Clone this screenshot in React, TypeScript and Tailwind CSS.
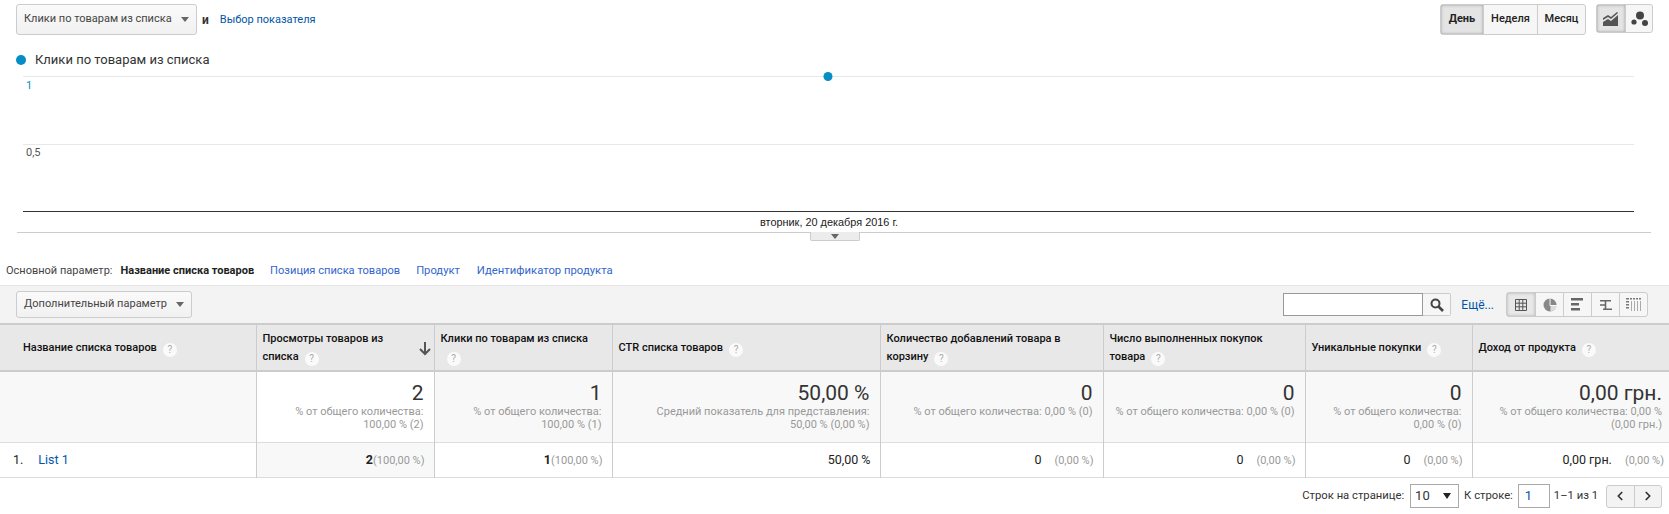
import { ChevronLeft, ChevronRight } from "lucide-react";

const link = "text-[#05a]";
const btn = "border border-[#ccc] bg-gradient-to-b from-[#fafafa] to-[#f1f1f1]";

const columns = [
  { title: "Просмотры товаров из", rest: "списка", big: "2", note: ["% от общего количества:", "100,00 % (2)"], value: "2", pct: "(100,00 %)", sorted: true, tight: true },
  { title: "Клики по товарам из списка", rest: "", big: "1", note: ["% от общего количества:", "100,00 % (1)"], value: "1", pct: "(100,00 %)", tight: true },
  { title: "CTR списка товаров", big: "50,00 %", note: ["Средний показатель для представления:", "50,00 % (0,00 %)"], value: "50,00 %", pct: "", single: true },
  { title: "Количество добавлений товара в", rest: "корзину", big: "0", note: ["% от общего количества: 0,00 % (0)"], value: "0", pct: "(0,00 %)" },
  { title: "Число выполненных покупок", rest: "товара", big: "0", note: ["% от общего количества: 0,00 % (0)"], value: "0", pct: "(0,00 %)" },
  { title: "Уникальные покупки", big: "0", note: ["% от общего количества:", "0,00 % (0)"], value: "0", pct: "(0,00 %)", single: true },
  { title: "Доход от продукта", big: "0,00 грн.", note: ["% от общего количества: 0,00 %", "(0,00 грн.)"], value: "0,00 грн.", pct: "(0,00 %)", single: true, last: true },
];

function Help() {
  return (
    <span className="ml-[6px] inline-flex h-[14px] w-[14px] items-center justify-center rounded-full bg-white/80 align-[-2px] text-[10px] font-normal text-[#aaa]">
      ?
    </span>
  );
}

function Caret() {
  return <span className="h-0 w-0 border-x-[4px] border-t-[5px] border-x-transparent border-t-[#666]" />;
}

function Chart() {
  return (
    <svg width="1669" height="171" viewBox="0 70 1669 171" className="block">
      <line x1="23" x2="1634" y1="76.5" y2="76.5" stroke="#e8e8e8" />
      <line x1="23" x2="1634" y1="144.5" y2="144.5" stroke="#e8e8e8" />
      <line x1="23" x2="1634" y1="211.5" y2="211.5" stroke="#333" />
      <line x1="17" x2="1651" y1="232.5" y2="232.5" stroke="#ccc" />
      <circle cx="828" cy="76.5" r="4.5" fill="#058dc7" />
      <text x="26" y="89" fontSize="11" fill="#058dc7" fontFamily="Roboto">1</text>
      <text x="26" y="156" fontSize="11" fill="#555" fontFamily="Roboto">0,5</text>
      <text x="760" y="226" fontSize="10.9" fill="#222" fontFamily="Liberation Sans">вторник, 20 декабря 2016 г.</text>
    </svg>
  );
}

function ViewIcons() {
  return (
    <div className="ml-[12px] flex h-[25px] rounded-[3px] border border-[#ccc] bg-[#f6f6f6]">
      <span className="flex w-[28px] items-center justify-center bg-[#e8e8e8] shadow-[inset_0_0_3px_#aaa]">
        <svg width="14" height="14" viewBox="0 0 14 14" fill="none" stroke="#555">
          <path d="M1.5 1.5h11v11h-11zM1.5 5.2h11M1.5 8.8h11M5.2 1.5v11M8.8 1.5v11" />
        </svg>
      </span>
      <span className="flex w-[28px] items-center justify-center border-l border-[#ccc]">
        <svg width="14" height="14" viewBox="0 0 14 14">
          <circle cx="7" cy="7" r="6.5" fill="#888" />
          <path d="M7.5 7.5h6A6.5 6.5 0 0 1 7.5 13.5z" fill="#ddd" />
          <path d="M7 0v7.5h7" fill="none" stroke="#f6f6f6" />
        </svg>
      </span>
      <span className="flex w-[28px] items-center justify-center border-l border-[#ccc]">
        <svg width="13" height="13" viewBox="0 0 13 13" fill="#666">
          <path d="M0 0h12v2.5H0zM0 5h8v2.5H0zM0 10h9v2.5H0z" />
        </svg>
      </span>
      <span className="flex w-[28px] items-center justify-center border-l border-[#ccc]">
        <svg width="13" height="12" viewBox="0 0 13 12" fill="#666">
          <path d="M1 1h11v1.5H1zM1 5.2h6V6.7H1zM4 9.5h9V11H4zM5.7 1h1.6v10H5.7z" />
        </svg>
      </span>
      <span className="flex w-[28px] items-center justify-center border-l border-[#ccc]">
        <svg width="15" height="13" viewBox="0 0 15 13">
          <path d="M0 0h3v1.5H0zM4 0h2v1.5H4zM7 0h2v1.5H7zM10 0h2v1.5h-2zM13 0h2v1.5h-2zM0 3h3v1.5H0zM0 6h3v1.5H0zM0 9h3v1.5H0z" fill="#777" />
          <path d="M5 3h1v10H5zM8 3h1v10H8zM11 3h1v10h-1zM14 3h1v10h-1z" fill="#aaa" />
        </svg>
      </span>
    </div>
  );
}

function Pager() {
  return (
    <div className="flex h-[37px] items-center justify-end pr-[7px] text-[11.25px] text-[#333]">
      <span>Строк на странице:</span>
      <span className="ml-[6px] flex h-[24px] w-[49px] items-center justify-between border border-[#aaa] bg-white px-[4px] text-[13px]">
        10
        <span className="mr-[3px] h-0 w-0 border-x-[4px] border-t-[6px] border-x-transparent border-t-[#222]" />
      </span>
      <span className="ml-[5px]">К строке:</span>
      <span className="ml-[5px] flex h-[24px] w-[32px] items-center border border-[#aaa] bg-white pl-[6px] text-[13px] text-[#05a]">1</span>
      <span className="ml-[4px]">1–1 из 1</span>
      <div className="ml-[8px] flex h-[23px] w-[56px] rounded-[3px] border border-[#ccc] bg-[#f3f3f3]">
        <span className="flex flex-1 items-center justify-center">
          <ChevronLeft size={14} strokeWidth={3} color="#333" />
        </span>
        <span className="flex flex-1 items-center justify-center border-l border-[#ccc]">
          <ChevronRight size={14} strokeWidth={3} color="#333" />
        </span>
      </div>
    </div>
  );
}

export default function App() {
  return (
    <div className="h-[514px] w-[1669px] overflow-hidden bg-white font-['Roboto',sans-serif] text-[11px] text-[#333]">
      <div className="flex h-[40px] items-start pt-[4px] pl-[16px] pr-[16px]">
        <div className={`${btn} flex h-[31px] w-[181px] items-center justify-between rounded-[3px] pl-[7px] pr-[7px] text-[#444]`}>
          Клики по товарам из списка
          <Caret />
        </div>
        <span className="ml-[5px] mt-[7px] text-[12px] font-bold">и</span>
        <span className={`${link} ml-[11px] mt-[8px]`}>Выбор показателя</span>
        <div className="ml-auto flex font-medium text-[#222]">
          <div className="flex h-[31px] w-[146px] rounded-[3px] border border-[#ccc] bg-[#f6f6f6]">
            <span className="flex w-[42px] items-center justify-center bg-[#e4e4e4] font-bold shadow-[inset_0_0_3px_#999]">День</span>
            <span className="flex w-[54px] items-center justify-center border-l border-[#ccc]">Неделя</span>
            <span className="flex flex-1 items-center justify-center border-l border-[#ccc]">Месяц</span>
          </div>
          <div className="ml-[10px] flex h-[29px] w-[57px] rounded-[3px] border border-[#ccc] bg-[#f6f6f6]">
            <span className="flex w-[28px] items-center justify-center bg-[#e4e4e4] shadow-[inset_0_0_3px_#999]">
              <svg width="16" height="15" viewBox="0 0 16 15" fill="#555">
                <path d="M0 7l5-3 3 2 6-5 1 1-7 6-3-2-5 3zM0 15v-4l5-3 3 2 7-6v11z" />
              </svg>
            </span>
            <span className="flex flex-1 items-center justify-center border-l border-[#ccc]">
              <svg width="17" height="16" viewBox="0 0 17 16" fill="#444">
                <circle cx="9" cy="4.5" r="4" />
                <circle cx="3" cy="11" r="2.6" />
                <circle cx="14" cy="12" r="3" />
              </svg>
            </span>
          </div>
        </div>
      </div>

      <div className="flex h-[30px] items-center pl-[16px] pt-[10px] text-[13px] text-[#333]">
        <span className="mr-[9px] h-[10px] w-[10px] rounded-full bg-[#058dc7]" />
        Клики по товарам из списка
      </div>

      <div className="relative">
        <Chart />
        <span className="absolute left-[810px] top-[162px] flex h-[9px] w-[50px] items-center justify-center rounded-b-[2px] border border-t-0 border-[#ccc] bg-[#ececec]">
          <Caret />
        </span>
      </div>

      <div className="flex h-[44px] items-center pl-[6px] pt-[16px] text-[#444]">
        <span>Основной параметр:</span>
        <span className="ml-[8px] font-bold text-[#222]">Название списка товаров</span>
        <span className="ml-[16px] text-[11.1px] text-[#36c]">Позиция списка товаров</span>
        <span className="ml-[16px] text-[11.2px] text-[#36c]">Продукт</span>
        <span className="ml-[17px] text-[11.3px] text-[#36c]">Идентификатор продукта</span>
      </div>

      <div className="flex h-[38px] items-center justify-between border-t border-[#e5e5e5] bg-[#f3f3f3] pl-[16px] pr-[21px]">
        <div className={`${btn} flex h-[27px] w-[176px] items-center justify-between rounded-[3px] pl-[7px] pr-[7px] text-[#444]`}>
          Дополнительный параметр
          <Caret />
        </div>
        <div className="flex items-center">
          <span className="h-[23px] w-[140px] border border-[#999] bg-white" />
          <span className="flex h-[23px] w-[28px] items-center justify-center rounded-r-[2px] border border-l-0 border-[#ccc] bg-[#f6f6f6]">
            <svg width="14" height="14" viewBox="0 0 14 14" fill="none" stroke="#444" strokeWidth="2">
              <circle cx="5.5" cy="5.5" r="4" />
              <path d="M8.5 8.5l4.5 4.5" strokeWidth="2.6" />
            </svg>
          </span>
          <span className={`${link} ml-[10px] text-[12px]`}>Ещё...</span>
          <ViewIcons />
        </div>
      </div>

      <table className="w-[1669px] table-fixed border-collapse">
        <colgroup>
          <col className="w-[256px]" />
          <col className="w-[178px]" />
          <col className="w-[178px]" />
          <col className="w-[268px]" />
          <col className="w-[223px]" />
          <col className="w-[202px]" />
          <col className="w-[167px]" />
          <col className="w-[197px]" />
        </colgroup>
        <thead>
          <tr className="h-[47px] border-y-2 border-[#ccc] bg-[#e8e8e8] text-left text-[11px] font-medium leading-[18px] text-[#111]">
            <th className="pl-[23px] font-medium">
              Название списка товаров
              <Help />
            </th>
            {columns.map((c) => (
              <th key={c.title} className="relative border-l border-[#ccc] pl-[6px] pr-[6px] font-medium">
                <div>
                  {c.title}
                  {c.single && <Help />}
                </div>
                {!c.single && (
                  <div>
                    {c.rest}
                    <Help />
                  </div>
                )}
                {c.sorted && (
                  <svg width="12" height="14" viewBox="0 0 12 14" fill="none" stroke="#555" strokeWidth="2" className="absolute right-[3px] top-[17px]">
                    <path d="M6 0v12M1 7l5 5 5-5" />
                  </svg>
                )}
              </th>
            ))}
          </tr>
        </thead>
        <tbody>
          <tr className="h-[71px] border-b border-[#ddd] bg-[#f8f8f8] align-top">
            <td />
            {columns.map((c, i) => (
              <td key={c.title} className={`border-l border-[#ccc] pt-[9px] text-right ${c.last ? "pr-[7px]" : "pr-[10px]"} ${i === 0 ? "bg-white" : ""}`}>
                <div className="text-[21px] leading-[24px] text-[#333]">{c.big}</div>
                <div className="text-[11px] leading-[13px] text-[#999]">
                  {c.note.map((line) => (
                    <div key={line}>{line}</div>
                  ))}
                </div>
              </td>
            ))}
          </tr>
          <tr className="h-[35px] border-b border-[#ddd] text-[12.5px]">
            <td className="pl-[13px] pt-[1px]">
              <span className="text-[#222]">1.</span>
              <span className={`${link} ml-[15px]`}>List 1</span>
            </td>
            {columns.map((c, i) => (
              <td key={c.title} className={`border-l border-[#ccc] pt-[1px] text-right ${c.last ? "pr-[5px]" : "pr-[9px]"} ${i === 0 ? "bg-[#f8f8f8]" : ""}`}>
                <span className={c.tight ? "font-bold text-[#222]" : "text-[#222]"}>{c.value}</span>
                {c.pct && (
                  <span className={`${c.tight ? "" : "ml-[13px]"} text-[11px] text-[#999]`}>{c.pct}</span>
                )}
              </td>
            ))}
          </tr>
        </tbody>
      </table>

      <Pager />
    </div>
  );
}
